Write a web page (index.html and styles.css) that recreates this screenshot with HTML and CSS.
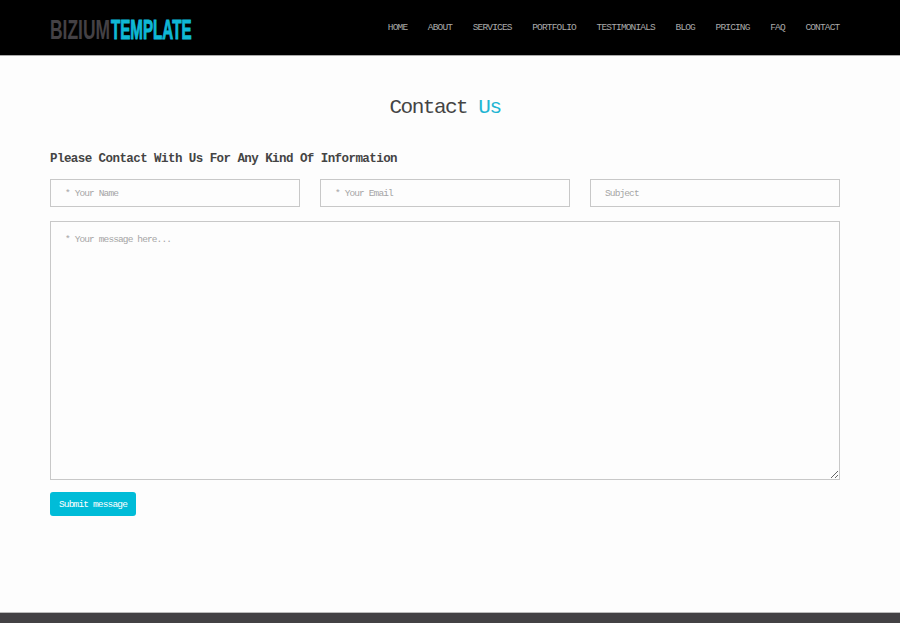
FILE: index.html
```html
<!DOCTYPE html>
<html lang="en">
<head>
  <meta charset="UTF-8" />
  <meta name="viewport" content="width=device-width, initial-scale=1" />
  <title>Bizium Template - Contact</title>
  <link rel="stylesheet" href="styles.css">
</head>
<body>
  <header class="header">
    <div class="container header-inner">
      <a class="logo" href="#">
        <svg width="150" height="34" viewBox="0 0 150 34">
          <g transform="translate(0 26) scale(1 1.74)">
            <text class="logo-dark" x="0" y="0" textLength="60" lengthAdjust="spacingAndGlyphs">BIZIUM</text>
            <text class="logo-blue" x="61" y="0" textLength="80.5" lengthAdjust="spacingAndGlyphs">TEMPLATE</text>
          </g>
        </svg>
      </a>
      <nav class="nav">
        <a href="#">HOME</a>
        <a href="#">ABOUT</a>
        <a href="#">SERVICES</a>
        <a href="#">PORTFOLIO</a>
        <a href="#">TESTIMONIALS</a>
        <a href="#">BLOG</a>
        <a href="#">PRICING</a>
        <a href="#">FAQ</a>
        <a href="#">CONTACT</a>
      </nav>
    </div>
  </header>

  <main class="container contact">
    <h2>Contact <span>Us</span></h2>
    <h3>Please Contact With Us For Any Kind Of Information</h3>
    <form>
      <div class="form-row">
        <input type="text" placeholder="* Your Name">
        <input type="text" placeholder="* Your Email">
        <input type="text" placeholder="Subject">
      </div>
      <textarea placeholder="* Your message here..."></textarea>
      <button type="button">Submit message</button>
    </form>
  </main>

  <footer class="footer"></footer>
</body>
</html>
```
FILE: styles.css
```css
* {
  box-sizing: border-box;
}

body {
  margin: 0;
  height: 623px;
  display: flex;
  flex-direction: column;
  overflow: hidden;
  background: #fdfdfd;
  color: #444;
  font-family: "Liberation Mono", monospace;
}

.container {
  width: 790px;
  margin-left: 50px;
}

/* Header */
.header {
  height: 56px;
  background: #000;
  border-bottom: 1px solid #aaa;
}

.header-inner {
  height: 55px;
  display: flex;
  justify-content: space-between;
  align-items: center;
}

.logo {
  height: 34px;
  margin-top: 4px;
}

.logo svg {
  display: block;
}

.logo text {
  font-family: "Liberation Sans", Arial, sans-serif;
  font-size: 15.5px;
  font-weight: bold;
}

.logo-dark {
  fill: #444145;
}

.logo-blue {
  fill: #0fb8d6;
  stroke: #0fb8d6;
  stroke-width: 0.6px;
}

.nav {
  display: flex;
  gap: 20.6px;
  margin-right: 0.6px;
}

.nav a {
  color: #aaa;
  font-size: 9.5px;
  line-height: 14px;
  letter-spacing: -0.84px;
  text-decoration: none;
}

/* Contact form */
.contact {
  flex: 1;
}

h2 {
  margin: 38px 0 0;
  font-size: 21px;
  font-weight: normal;
  line-height: 28px;
  letter-spacing: -1.5px;
  text-align: center;
}

h2 span {
  color: #1fb5d3;
}

h3 {
  margin: 28px 0 11px;
  font-size: 12.5px;
  line-height: 18px;
  letter-spacing: -0.56px;
}

.form-row {
  display: grid;
  grid-template-columns: repeat(3, 1fr);
  gap: 20px;
  margin-bottom: 14px;
}

input,
textarea {
  display: block;
  width: 100%;
  background: #fdfdfd;
  border: 1px solid #c8c8c8;
  border-radius: 0;
  font-family: inherit;
  font-size: 9.5px;
  letter-spacing: -0.88px;
}

input {
  height: 28px;
  padding: 0 14px;
}

textarea {
  height: 259px;
  padding: 12px 14px;
  resize: both;
}

::placeholder {
  color: #a5a5a5;
}

button {
  display: block;
  width: 86px;
  height: 24px;
  margin-top: 12px;
  padding: 0;
  background: #00bcd8;
  border: 0;
  border-radius: 3px;
  color: #fff;
  font-family: inherit;
  font-size: 9.5px;
  letter-spacing: -0.84px;
}

.footer {
  height: 11px;
  background: #434144;
  border-top: 1px solid #bbb;
}
```
